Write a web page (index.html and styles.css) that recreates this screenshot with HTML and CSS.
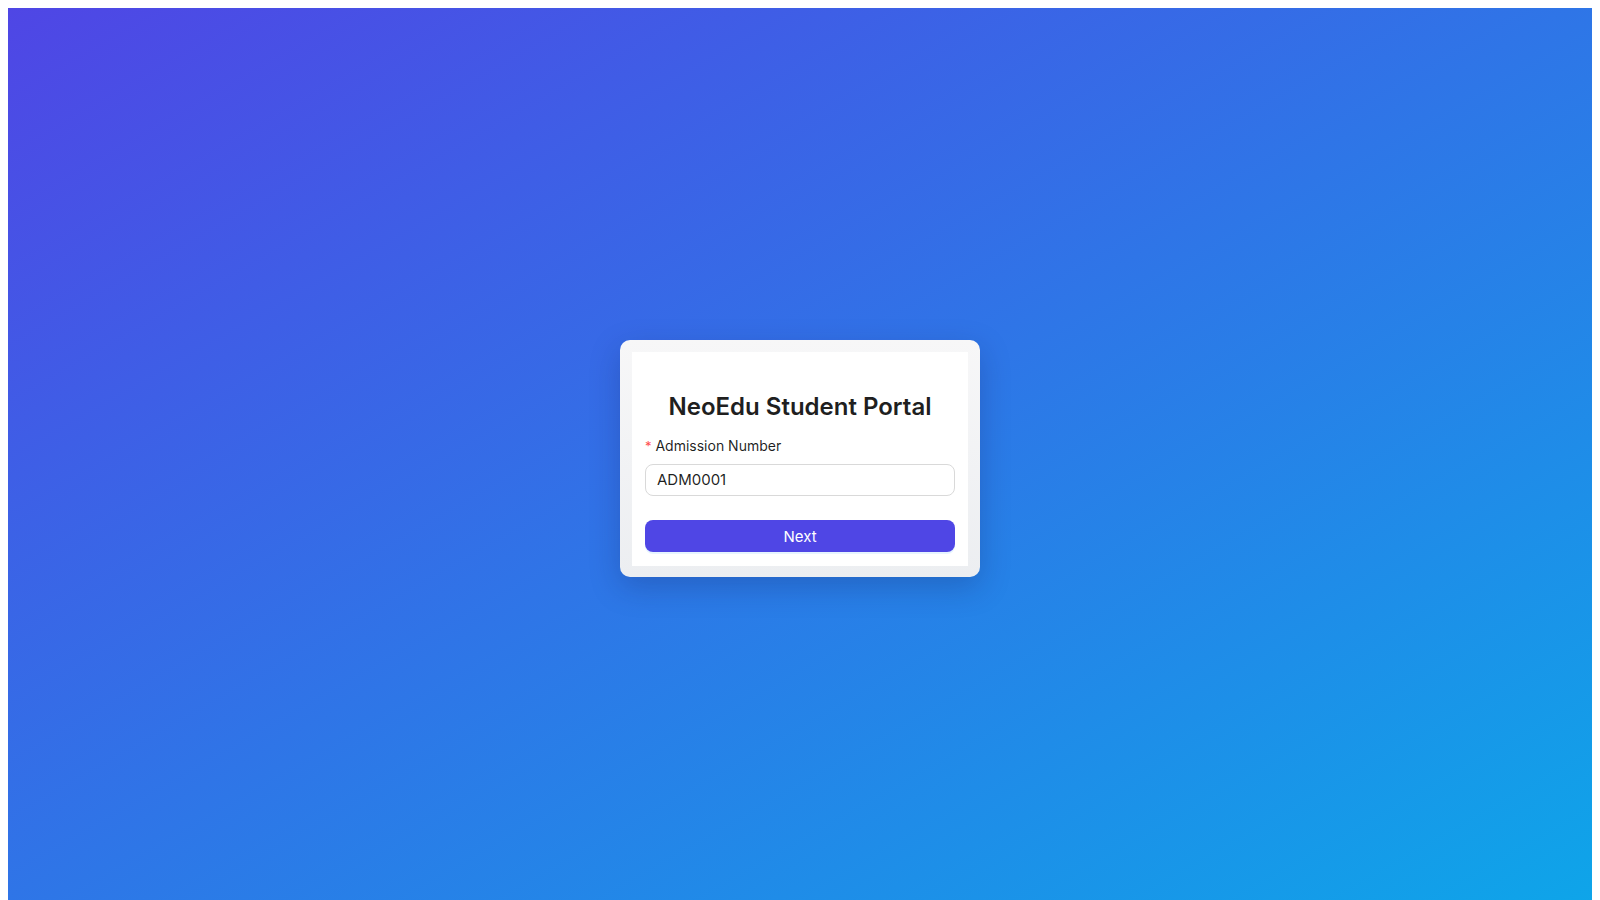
FILE: index.html
```html
<!DOCTYPE html>
<html lang="en">
<head>
<meta charset="utf-8">
<title>NeoEdu Student Portal</title>
<link rel="stylesheet" href="styles.css">
</head>
<body>
<div class="screen">
  <div class="card">
    <div class="card-inner">
      <h3 class="title">NeoEdu Student Portal</h3>
      <form class="form" onsubmit="return false">
        <div class="form-item">
          <label class="label" for="adm"><span class="req">*</span> Admission Number</label>
          <input class="input" id="adm" type="text" value="ADM0001">
        </div>
        <button class="btn" type="submit">Next</button>
      </form>
    </div>
  </div>
</div>
</body>
</html>
```
FILE: styles.css
```css
html, body {
  margin: 0;
  padding: 0;
}
body {
  margin: 8px;
  font-family: Inter, "Noto Sans", sans-serif;
}
.screen {
  min-height: 100vh;
  background: linear-gradient(to bottom right, #4f46e5, #0ea5e9);
  display: flex;
  align-items: center;
  justify-content: center;
}
.card {
  width: 360px;
  box-sizing: border-box;
  padding: 12px 12px 11px 12px;
  background: linear-gradient(to bottom, #f7f7f8, #eceef1);
  border-radius: 10px;
  box-shadow: 0 10px 30px rgba(20, 30, 90, 0.25);
}
.card-inner {
  background: #ffffff;
  padding: 39px 13px 14px 13px;
}
.title {
  margin: 0 0 12px 0;
  text-align: center;
  font-size: 24px;
  line-height: 32px;
  font-weight: 600;
  color: #1f1f1f;
}
.form {
  margin: 0;
}
.form-item {
  margin-bottom: 24px;
}
.label {
  display: block;
  font-size: 14px;
  line-height: 22px;
  color: rgba(0, 0, 0, 0.88);
  margin-bottom: 7px;
}
.req {
  color: #ff4d4f;
  font-size: 13px;
}
.input {
  display: block;
  width: 100%;
  box-sizing: border-box;
  height: 32px;
  border: 1px solid #d9d9d9;
  border-radius: 8px;
  padding: 0 11px;
  font-family: inherit;
  font-size: 15px;
  color: rgba(0, 0, 0, 0.88);
  background: #fff;
  outline: none;
}
.btn {
  display: block;
  width: 100%;
  height: 32px;
  padding-top: 2px;
  border: none;
  border-radius: 8px;
  background: #4f46e5;
  color: #fff;
  font-family: inherit;
  font-size: 15px;
  font-weight: 400;
  cursor: pointer;
  box-shadow: 0 2px 0 rgba(5, 145, 255, 0.1);
}
```
